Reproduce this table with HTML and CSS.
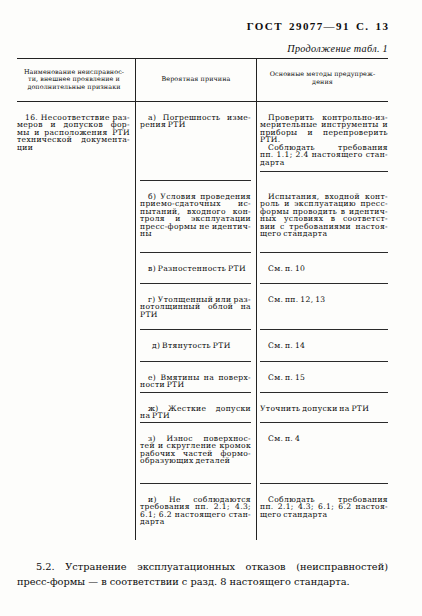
FILE: index.html
```html
<!DOCTYPE html>
<html lang="ru">
<head>
<meta charset="utf-8">
<link rel="stylesheet" href="styles.css">
</head>
<body>
<div class="page">
  <div class="doc-id">ГОСТ 29077—91 С. 13</div>
  <div class="cont">Продолжение табл. 1</div>

  <div class="table">
    <div class="thead">
      <div class="th th1">
        <span class="hl">Наименование неисправнос-</span>
        <span class="hl">ти, внешнее проявление и</span>
        <span class="hl">дополнительные признаки</span>
      </div>
      <div class="th th2"><span class="hl">Вероятная причина</span></div>
      <div class="th th3">
        <span class="hl">Основные методы предупреж-</span>
        <span class="hl">дения</span>
      </div>
    </div>

    <div class="tbody">
      <div class="c1">
        <span class="l i">16. Несоответствие раз-</span>
        <span class="l">меров и допусков фор-</span>
        <span class="l">мы и расположения РТИ</span>
        <span class="l">технической документа-</span>
        <span class="l e">ции</span>
      </div>
      <div class="vr"></div>

      <div class="c2 r1">
        <span class="l i">а) Погрешность изме-</span>
        <span class="l e">рения РТИ</span>
      </div>
      <div class="c3 r1 short">
        <span class="l i">Проверить контрольно-из-</span>
        <span class="l">мерительные инструменты и</span>
        <span class="l">приборы и перепроверить</span>
        <span class="l e">РТИ.</span>
        <span class="l i">Соблюдать требования</span>
        <span class="l">пп. 1.1; 2.4 настоящего стан-</span>
        <span class="l e">дарта</span>
      </div>

      <div class="c2 r2">
        <span class="l i">б) Условия проведения</span>
        <span class="l">приемо-сдаточных ис-</span>
        <span class="l">пытаний, входного кон-</span>
        <span class="l">троля и эксплуатации</span>
        <span class="l">пресс-формы не идентич-</span>
        <span class="l e">ны</span>
      </div>
      <div class="c3 r2">
        <span class="l i">Испытания, входной конт-</span>
        <span class="l">роль и эксплуатацию пресс-</span>
        <span class="l">формы проводить в идентич-</span>
        <span class="l">ных условиях в соответст-</span>
        <span class="l">вии с требованиями настоя-</span>
        <span class="l e">щего стандарта</span>
      </div>

      <div class="c2 r3"><span class="l e i">в) Разностенность РТИ</span></div>
      <div class="c3 r3"><span class="l e i">См. п. 10</span></div>

      <div class="c2 r4">
        <span class="l i">г) Утолщенный или раз-</span>
        <span class="l">нотолщинный облой на</span>
        <span class="l e">РТИ</span>
      </div>
      <div class="c3 r4"><span class="l e i">См. пп. 12, 13</span></div>

      <div class="c2 r5"><span class="l e i2">д) Втянутость РТИ</span></div>
      <div class="c3 r5"><span class="l e i">См. п. 14</span></div>

      <div class="c2 r6">
        <span class="l i">е) Вмятины на поверх-</span>
        <span class="l e">ности РТИ</span>
      </div>
      <div class="c3 r6"><span class="l e i">См. п. 15</span></div>

      <div class="c2 r7">
        <span class="l i">ж) Жесткие допуски</span>
        <span class="l e">на РТИ</span>
      </div>
      <div class="c3 r7"><span class="l e">Уточнить допуски на РТИ</span></div>

      <div class="c2 r8">
        <span class="l i">з) Износ поверхнос-</span>
        <span class="l">тей и скругление кромок</span>
        <span class="l">рабочих частей формо-</span>
        <span class="l e">образующих деталей</span>
      </div>
      <div class="c3 r8"><span class="l e i">См. п. 4</span></div>

      <div class="c2 r9 nob">
        <span class="l i">и) Не соблюдаются</span>
        <span class="l">требования пп. 2.1; 4.3;</span>
        <span class="l">6.1; 6.2 настоящего стан-</span>
        <span class="l e">дарта</span>
      </div>
      <div class="c3 r9 nob">
        <span class="l i">Соблюдать требования</span>
        <span class="l">пп. 2.1; 4.3; 6.1; 6.2 настоя-</span>
        <span class="l e">щего стандарта</span>
      </div>
    </div>
  </div>

  <div class="para">
    <span class="pl pi">5.2. Устранение эксплуатационных отказов (неисправностей)</span>
    <span class="pl pe">пресс-формы — в соответствии с разд. 8 настоящего стандарта.</span>
  </div>
</div>
</body>
</html>
```

FILE: styles.css
```css
html, body {
  margin: 0;
  background: #fdfdfb;
}
body {
  color: #0c0c0c;
  font-family: "DejaVu Serif", "Liberation Serif", serif;
}
.page {
  width: 371px;
  padding: 20px 34px 0 17px;
}
.doc-id {
  text-align: right;
  font-family: "Liberation Serif", serif;
  font-weight: bold;
  font-size: 11px;
  line-height: 12px;
  letter-spacing: 1.4px;
  word-spacing: 2px;
  margin-right: -1.4px;
}
.cont {
  margin-top: 11px;
  text-align: right;
  font-family: "Liberation Serif", serif;
  font-style: italic;
  font-size: 10.2px;
  line-height: 12px;
  letter-spacing: 0.3px;
}
.table {
  margin-top: 3px;
}
.thead {
  display: grid;
  grid-template-columns: 119px 121px 131px;
  height: 44px;
  box-sizing: border-box;
  border-top: 1.5px solid #222;
  border-bottom: 1px solid #222;
}
.th {
  display: flex;
  flex-direction: column;
  justify-content: center;
  align-items: center;
  font-size: 6.4px;
  line-height: 7.2px;
  letter-spacing: 0.1px;
  white-space: nowrap;
}
.th1, .th2 {
  border-right: 1px solid #222;
}
.th1 {
  padding-right: 4px;
}
.th3 {
  padding-bottom: 3px;
}
.tbody {
  display: grid;
  grid-template-columns: 119px 120px 1px 131px;
  grid-template-rows: 79px 72px 31px 46px 32px 31px 30px 61px 56px;
  font-size: 7.6px;
  line-height: 7.6px;
  letter-spacing: 0.35px;
  word-spacing: -1px;
}
.c1 {
  grid-column: 1;
  grid-row: 1 / -1;
  border-right: 1px solid #222;
  padding: 11.5px 5px 0 0;
}
.vr {
  grid-column: 3;
  grid-row: 1 / -1;
  background: #222;
}
.c2, .c3 {
  box-sizing: border-box;
  padding-top: 11.5px;
  border-bottom: 1px solid #2a2a2a;
}
.c2 {
  grid-column: 2;
  margin: 0 5px 0 4px;
}
.c3 {
  grid-column: 4;
  margin: 0 0 0 3px;
}
.nob {
  border-bottom: none;
}
.r1 { grid-row: 1; }
.r2 { grid-row: 2; }
.r3 { grid-row: 3; }
.r4 { grid-row: 4; }
.r5 { grid-row: 5; }
.r6 { grid-row: 6; }
.r7 { grid-row: 7; }
.r8 { grid-row: 8; }
.r9 { grid-row: 9; }
.short {
  align-self: start;
  height: 70px;
}
.l {
  display: block;
  white-space: nowrap;
  text-align: justify;
  text-align-last: justify;
}
.l.e {
  text-align: left;
  text-align-last: left;
}
.i {
  padding-left: 8px;
}
.i2 {
  padding-left: 12px;
}
.para {
  margin-top: 19px;
  font-size: 9.8px;
  line-height: 15px;
}
.pl {
  display: block;
  white-space: nowrap;
}
.pi {
  padding-left: 19px;
  text-align: justify;
  text-align-last: justify;
}
.pe {
  text-align: left;
}
```
